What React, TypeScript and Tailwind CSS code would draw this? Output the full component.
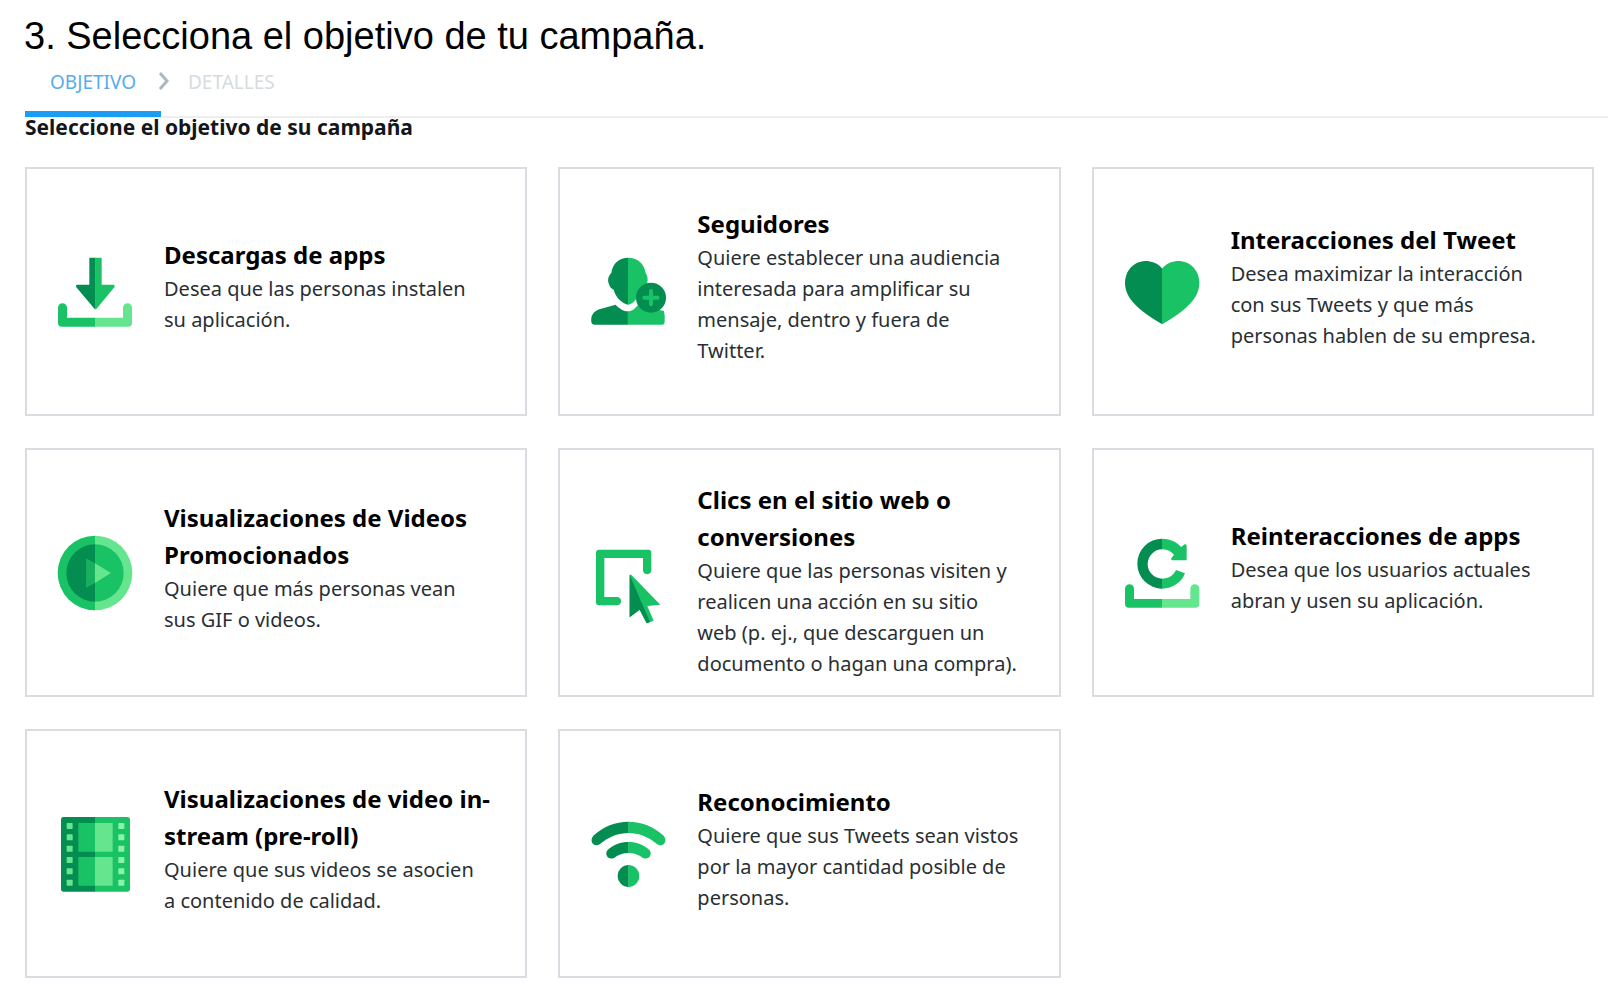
import type { ReactNode } from "react";
import { useState } from "react";

const DARK = "#048d51";
const GREEN = "#19c265";
const LIGHT = "#64e58e";

interface Objective {
  id: string;
  title: string;
  description: string;
  viewBox: string;
  icon: ReactNode;
}

const objectives: Objective[] = [
  {
    id: "app-installs",
    title: "Descargas de apps",
    description: "Desea que las personas instalen su aplicación.",
    viewBox: "54 58 222 222",
    icon: (
      <>
        <path d="M148 66H167V221Q164 221 162 218L109 155Q106 148 112 147H148Z" fill={DARK} />
        <path d="M185 66H166V221Q169 221 171 218L223 155Q226 148 220 147H185Z" fill={GREEN} />
        <path d="M54 216a13 13 0 0 1 27 0V246H166V273H66Q54 273 54 261Z" fill={GREEN} />
        <path d="M276 216a13 13 0 0 0-27 0V246H165V273H264Q276 273 276 261Z" fill={LIGHT} />
      </>
    ),
  },
  {
    id: "followers",
    title: "Seguidores",
    description:
      "Quiere establecer una audiencia interesada para amplificar su mensaje, dentro y fuera de Twitter.",
    viewBox: "51 58 222 222",
    icon: (
      <>
        <path
          d="M163 66C136 66 116 82 112 112C102 122 100 135 105 145C108 155 112 159 119 162C124 182 141 202 163 207Z"
          fill={DARK}
        />
        <path
          d="M162 66C190 66 210 82 215 112C221 121 222 130 220 141L188 188C181 199 173 206 162 207Z"
          fill={GREEN}
        />
        <path d="M162 227C145 226 133 216 125 207L76 221C56 229 50 241 52 260Q53 267 61 267H162Z" fill={DARK} />
        <path d="M161 227C175 227 184 219 191 209L270 226Q273 240 272 258Q272 267 264 267H161Z" fill={GREEN} />
        <circle cx="231" cy="186" r="45" fill={DARK} />
        <path d="M231 166V206M211 186H251" stroke={GREEN} strokeWidth="12" strokeLinecap="round" />
      </>
    ),
  },
  {
    id: "engagements",
    title: "Interacciones del Tweet",
    description:
      "Desea maximizar la interacción con sus Tweets y que más personas hablen de su empresa.",
    viewBox: "45 58 222 222",
    icon: (
      <>
        <path d="M157 99C143 82 125 76 105 76C69 78 45 107 45 142C45 188 86 225 157 266Z" fill={DARK} />
        <path d="M156 99C170 82 187 76 208 76C244 78 268 107 268 142C268 188 227 225 156 266Z" fill={GREEN} />
      </>
    ),
  },
  {
    id: "video-views",
    title: "Visualizaciones de Videos Promocionados",
    description: "Quiere que más personas vean sus GIF o videos.",
    viewBox: "54 61 222 222",
    icon: (
      <>
        <path d="M165 60a112 112 0 0 0 0 224Z" fill={GREEN} />
        <path d="M165 60a112 112 0 0 1 0 224Z" fill={LIGHT} />
        <path d="M165 86a86 86 0 0 0 0 172Z" fill={DARK} />
        <path d="M165 86a86 86 0 0 1 0 172Z" fill={GREEN} />
        <path d="M138 128L165 143V202L138 216Z" fill="#16b05e" />
        <path d="M165 143L213 172L165 202Z" fill={LIGHT} />
      </>
    ),
  },
  {
    id: "website-clicks",
    title: "Clics en el sitio web o conversiones",
    description:
      "Quiere que las personas visiten y realicen una acción en su sitio web (p. ej., que descarguen un documento o hagan una compra).",
    viewBox: "51 72 222 222",
    icon: (
      <>
        <path
          d="M66 83Q66 74 75 74H223Q232 74 232 83V138a13 13 0 0 1-25 0V99H91V216H129a12 12 0 0 1 0 25H75Q66 241 66 232Z"
          fill={GREEN}
        />
        <path d="M167 150Q169 147 173 151L259 239L220 243L239 287L218 295L197 254L167 277Z" fill={GREEN} />
        <path d="M167 150L209 247L228 291L218 295L197 254L167 277Z" fill={DARK} />
      </>
    ),
  },
  {
    id: "app-reengagements",
    title: "Reinteracciones de apps",
    description: "Desea que los usuarios actuales abran y usen su aplicación.",
    viewBox: "45 61 222 222",
    icon: (
      <>
        <path d="M157 69a75 75 0 0 0 0 150V189a44 44 0 0 1 0-88Z" fill={DARK} />
        <path
          d="M156 69C179 69 199 78 214 94L224 86Q230 84 230 91V134H187Q181 133 184 128L192 117C182 106 170 101 156 101Z"
          fill={GREEN}
        />
        <path d="M156 219C188 219 215 200 225 173L198 163C190 180 175 189 156 189Z" fill={GREEN} />
        <path d="M45 219a13 13 0 0 1 27 0V250H157V276H57Q45 276 45 264Z" fill={GREEN} />
        <path d="M268 219a13 13 0 0 0-27 0V250H156V276H256Q268 276 268 264Z" fill={LIGHT} />
      </>
    ),
  },
  {
    id: "preroll-views",
    title: "Visualizaciones de video in-stream (pre-roll)",
    description: "Quiere que sus videos se asocien a contenido de calidad.",
    viewBox: "54 49 222 222",
    icon: (
      <>
        <path d="M166 49H71Q63 49 63 57V265Q63 273 71 273H166Z" fill={DARK} />
        <path d="M165 49H262Q270 49 270 57V265Q270 273 262 273H165Z" fill={GREEN} />
        <path d="M115 67H166V153H115ZM115 169H166V255H115Z" fill={GREEN} />
        <path d="M165 67H218V153H165ZM165 169H218V255H165Z" fill={LIGHT} />
        {[67, 101, 135, 169, 203, 237].map((y) => (
          <g key={y}>
            <rect x="80" y={y} width="18" height="18" rx="2" fill={LIGHT} />
            <rect x="235" y={y} width="18" height="18" rx="2" fill="#8bf3a8" />
          </g>
        ))}
      </>
    ),
  },
  {
    id: "awareness",
    title: "Reconocimiento",
    description: "Quiere que sus Tweets sean vistos por la mayor cantidad posible de personas.",
    viewBox: "51 49 222 222",
    icon: (
      <>
        <path d="M164 63C124 63 88 77 58 105C44 121 60 141 77 131C104 108 133 97 164 97Z" fill={DARK} />
        <path d="M163 63C203 63 239 77 269 105C283 121 267 141 250 131C223 108 194 97 163 97Z" fill={GREEN} />
        <path d="M164 124C139 124 119 132 103 146C88 160 103 180 120 172C133 162 147 157 164 157Z" fill={DARK} />
        <path d="M163 124C188 124 208 132 224 146C239 160 224 180 207 172C194 162 180 157 163 157Z" fill={GREEN} />
        <path d="M164 193a33 33 0 0 0 0 66Z" fill={DARK} />
        <path d="M163 193a33 33 0 0 1 0 66Z" fill={GREEN} />
      </>
    ),
  },
];

interface ObjectiveCardProps {
  objective: Objective;
  onSelect: (id: string) => void;
}

function ObjectiveCard({ objective, onSelect }: ObjectiveCardProps) {
  return (
    <button
      type="button"
      onClick={() => onSelect(objective.id)}
      className="flex min-h-[249px] items-start border-2 border-[#d9dde1] bg-white pt-[31px] pr-[38px] pl-[31px] text-left"
    >
      <span className="flex min-h-[183px] w-full items-center gap-8">
        <svg
          viewBox={objective.viewBox}
          className="h-[74px] w-[74px] shrink-0 overflow-visible"
          fill="none"
          aria-hidden="true"
        >
          {objective.icon}
        </svg>
        <span className="block min-w-0 flex-1 pb-3">
          <span className="-mr-2 block text-[24px] leading-[37px] font-bold text-black">
            {objective.title}
          </span>
          <span className="block text-[20px] leading-[31px] text-[#292f33]">
            {objective.description}
          </span>
        </span>
      </span>
    </button>
  );
}

export default function App() {
  const [, setSelected] = useState<string | null>(null);

  return (
    <main className="min-h-screen bg-white pb-[7px] font-['Noto_Sans',sans-serif]">
      <h1 className="px-6 pt-4 font-['Liberation_Sans',Arial,sans-serif] text-[38px] leading-10 text-black">
        3. Selecciona el objetivo de tu campaña.
      </h1>

      <nav className="ml-[25px] flex items-end border-b-2 border-[#eceef0] text-[19px] leading-[26px]">
        <a
          href="#objetivo"
          aria-current="step"
          className="-mb-[1px] border-b-6 border-[#1b9df5] px-[25px] pt-[13px] pb-4 text-[#55acee]"
        >
          OBJETIVO
        </a>
        <svg viewBox="0 0 10 18" className="mb-[26px] -ml-[2px] h-[18px] w-[10px]" fill="none" aria-hidden="true">
          <path d="M1 1L8 9L1 17" stroke="#aab8c2" strokeWidth="3" />
        </svg>
        <a href="#detalles" className="pb-[21px] pl-[19px] text-[#d5dbe0]">
          DETALLES
        </a>
      </nav>

      <section className="pr-[14px] pl-[25px]">
        <h2 className="text-[21px] leading-[18px] font-bold text-[#14171a]">
          Seleccione el objetivo de su campaña
        </h2>
        <div className="mt-[31px] grid grid-cols-3 gap-x-[31px] gap-y-8">
          {objectives.map((objective) => (
            <ObjectiveCard key={objective.id} objective={objective} onSelect={setSelected} />
          ))}
        </div>
      </section>
    </main>
  );
}
